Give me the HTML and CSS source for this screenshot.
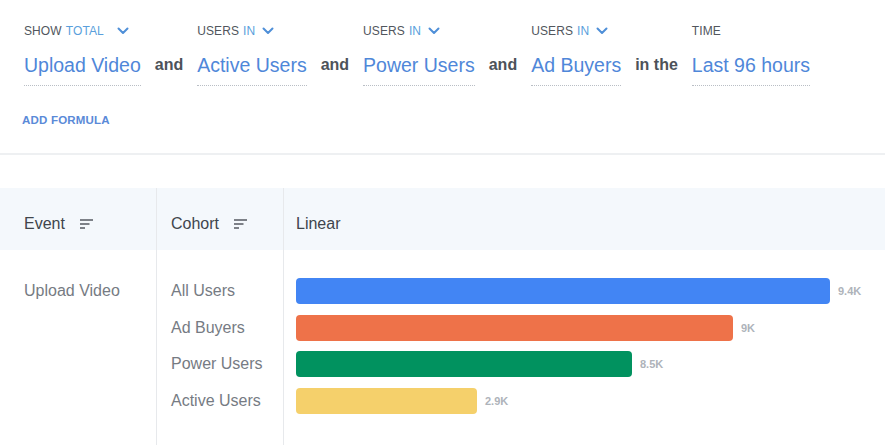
FILE: index.html
```html
<!DOCTYPE html>
<html lang="en">
<head>
<meta charset="utf-8">
<title>Query</title>
<link rel="stylesheet" href="styles.css">
</head>
<body>
<section class="query">
  <div class="formula">
    <div class="clause">
      <div class="label">SHOW <span class="accent">TOTAL</span>
        <svg class="chev chev-wide" viewBox="0 0 12 8" width="12" height="8"><path d="M1.5 1.5 L6 6 L10.5 1.5"/></svg>
      </div>
      <div class="value">Upload Video</div>
    </div>
    <div class="conj">and</div>
    <div class="clause">
      <div class="label">USERS <span class="accent">IN</span>
        <svg class="chev" viewBox="0 0 12 8" width="12" height="8"><path d="M1.5 1.5 L6 6 L10.5 1.5"/></svg>
      </div>
      <div class="value">Active Users</div>
    </div>
    <div class="conj">and</div>
    <div class="clause">
      <div class="label">USERS <span class="accent">IN</span>
        <svg class="chev" viewBox="0 0 12 8" width="12" height="8"><path d="M1.5 1.5 L6 6 L10.5 1.5"/></svg>
      </div>
      <div class="value">Power Users</div>
    </div>
    <div class="conj">and</div>
    <div class="clause">
      <div class="label">USERS <span class="accent">IN</span>
        <svg class="chev" viewBox="0 0 12 8" width="12" height="8"><path d="M1.5 1.5 L6 6 L10.5 1.5"/></svg>
      </div>
      <div class="value">Ad Buyers</div>
    </div>
    <div class="conj">in the</div>
    <div class="clause">
      <div class="label">TIME</div>
      <div class="value">Last 96 hours</div>
    </div>
  </div>
  <div class="add">ADD FORMULA</div>
</section>

<section class="table">
  <div class="thead">
    <div class="th col-event">Event
      <svg class="sort" viewBox="0 0 14 10" width="14" height="10"><path d="M0 1 H13 M0 5 H9.5 M0 9 H5"/></svg>
    </div>
    <div class="th col-cohort">Cohort
      <svg class="sort" viewBox="0 0 14 10" width="14" height="10"><path d="M0 1 H13 M0 5 H9.5 M0 9 H5"/></svg>
    </div>
    <div class="th col-chart">Linear</div>
  </div>
  <div class="tbody">
    <div class="td col-event">
      <div class="row">Upload Video</div>
    </div>
    <div class="td col-cohort">
      <div class="row">All Users</div>
      <div class="row">Ad Buyers</div>
      <div class="row">Power Users</div>
      <div class="row">Active Users</div>
    </div>
    <div class="td col-chart">
      <div class="row"><div class="bar blue" style="width:534px"></div><span class="num">9.4K</span></div>
      <div class="row"><div class="bar orange" style="width:437px"></div><span class="num">9K</span></div>
      <div class="row"><div class="bar green" style="width:336px"></div><span class="num">8.5K</span></div>
      <div class="row"><div class="bar yellow" style="width:181px"></div><span class="num">2.9K</span></div>
    </div>
  </div>
</section>
</body>
</html>
```

FILE: styles.css
```css
* { box-sizing: border-box; }

html, body {
  margin: 0;
  padding: 0;
  background: #ffffff;
  font-family: "Liberation Sans", Arial, sans-serif;
  color: #464b53;
}

body {
  width: 885px;
  height: 445px;
  overflow: hidden;
}

.query {
  padding: 23px 0 0 24px;
  height: 155px;
  border-bottom: 2px solid #eef0f2;
}

.formula {
  display: flex;
  align-items: flex-end;
  gap: 14px;
}

.clause {
  display: flex;
  flex-direction: column;
}

.label {
  display: flex;
  align-items: center;
  height: 15px;
  font-size: 12px;
  color: #51565d;
  letter-spacing: 0.1px;
}

.label .accent {
  color: #5a9fdc;
  margin-left: 4px;
}

.chev {
  margin-left: 7px;
  fill: none;
  stroke: #4f8fd8;
  stroke-width: 2;
  stroke-linecap: round;
  stroke-linejoin: round;
}

.chev-wide { margin-left: 13px; }

.value {
  margin-top: 16px;
  font-size: 19.5px;
  line-height: 22px;
  color: #4f87d9;
  padding-bottom: 9px;
  border-bottom: 1px dotted #b9bec5;
}

.conj {
  font-size: 16px;
  font-weight: bold;
  color: #4d5259;
  line-height: 22px;
  padding-bottom: 9px;
  margin-bottom: 1px;
}

.add {
  margin-top: 28px;
  margin-left: -2px;
  font-size: 11.5px;
  font-weight: bold;
  color: #5a8ad8;
  letter-spacing: 0.2px;
}

.table {
  margin-top: 33px;
}

.thead, .tbody {
  display: grid;
  grid-template-columns: 157px 127px 1fr;
}

.thead {
  height: 62px;
  background: #f4f8fc;
}

.th {
  display: flex;
  align-items: center;
  padding-top: 9px;
  font-size: 16px;
  color: #40454c;
}

.col-event { padding-left: 24px; border-right: 1px solid #e7e9ec; }
.col-cohort { padding-left: 14px; border-right: 1px solid #e7e9ec; }
.col-chart { padding-left: 12px; }

.sort {
  margin-left: 15px;
  fill: none;
  stroke: #555a61;
  stroke-width: 1.6;
}

.tbody {
  height: 195px;
}

.td {
  padding-top: 28px;
}

.row {
  height: 36.5px;
  display: flex;
  align-items: flex-start;
  font-size: 16px;
  color: #767b83;
  line-height: 26px;
}

.bar {
  height: 26px;
  border-radius: 4px;
  flex: none;
}

.blue { background: #4285f4; }
.orange { background: #ee7249; }
.green { background: #01925f; }
.yellow { background: #f5d06b; }

.num {
  margin-left: 8px;
  font-size: 11px;
  font-weight: bold;
  color: #aeb3ba;
  line-height: 26px;
}
```
